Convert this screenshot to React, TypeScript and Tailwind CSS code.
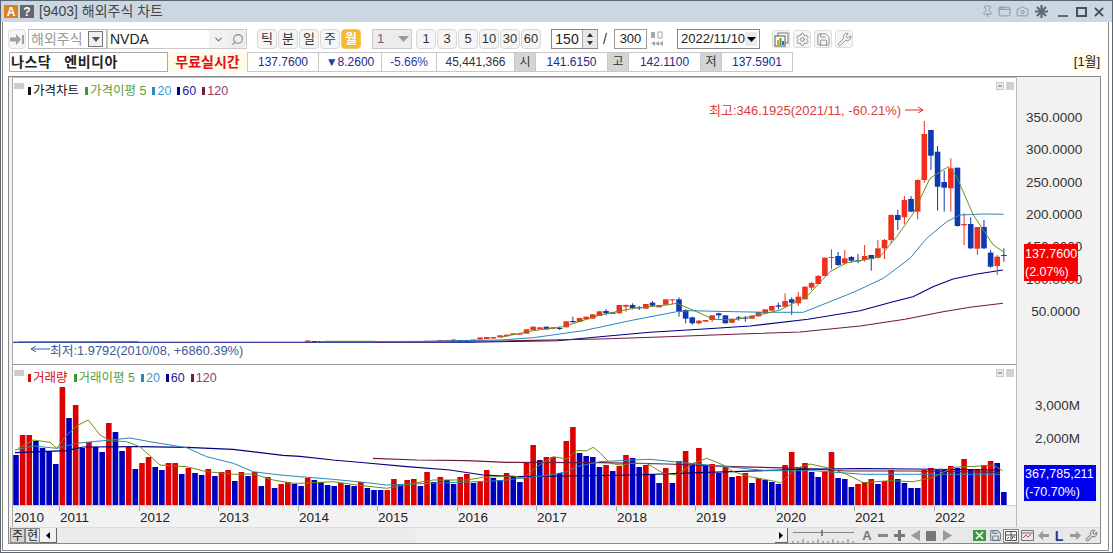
import React from "react";
import { Pin, AppWindow, Camera, Settings, Search, ChevronDown, Save, Wrench } from "lucide-react";

type P = [number, number];
const z = (ox: number, oy: number, pts: number[][]): P[] => pts.map(([x, y]) => [ox + x / 3, oy + y / 3] as P);
const line = (pts: P[]) => pts.map((p) => `${p[0].toFixed(1)},${p[1].toFixed(1)}`).join(" ");

// volume: height in px, R / B
const vol: [number, number][] = [
  [50,0],[70,1],[70,1],[64,0],[57,0],[54,0],[41,0],[118,1],[87,0],[100,1],[57,0],[63,1],[58,0],[53,0],[82,1],[73,0],[54,0],[58,1],[36,0],[42,1],
  [48,1],[38,0],[35,0],[42,1],[42,1],[31,0],[37,1],[32,0],[30,0],[36,1],[29,0],[33,1],[35,1],[24,0],[33,1],[29,0],[33,1],[19,0],[28,1],[17,0],
  [21,1],[23,1],[21,0],[19,0],[27,1],[25,0],[23,0],[20,0],[19,0],[22,1],[20,0],[19,0],[23,1],[17,0],[15,0],[15,0],[15,1],[26,1],[21,0],[25,1],
  [26,1],[19,0],[33,1],[23,0],[28,1],[25,0],[21,0],[28,1],[31,1],[22,0],[23,1],[35,1],[27,0],[25,0],[32,1],[29,0],[23,0],[43,1],[60,1],[45,0],
  [48,1],[48,1],[32,0],[64,1],[78,1],[52,0],[49,0],[48,0],[38,0],[40,1],[34,0],[39,1],[50,1],[47,0],[38,0],[40,1],[31,0],[22,0],[37,1],[22,0],
  [44,1],[54,1],[42,0],[57,1],[39,0],[41,1],[32,0],[39,1],[28,0],[29,1],[32,1],[22,0],[27,1],[25,0],[23,0],[21,0],[40,1],[53,1],[38,0],[42,1],
  [33,0],[28,0],[33,1],[53,1],[27,0],[26,0],[18,0],[21,1],[23,1],[26,1],[21,0],[24,1],[35,1],[26,0],[22,0],[17,0],[17,0],[35,1],[37,1],[35,0],
  [35,0],[39,1],[37,0],[46,1],[36,0],[36,1],[40,1],[44,1],[42,0],[13,0],
];

// candles: index, colour, body top, body bottom, wick top, wick bottom (zoomed coordinates)
const c8 = [
  [73,1,196,202],[74,1,194,199],[75,1,190,195],[76,1,190,194],[77,1,178,191],[78,1,170,180],[79,1,172,177],[80,0,170,178],[81,1,172,176],[82,0,174,176,170,180],
  [83,1,154,172],[84,0,153,157,140,157],[85,1,144,156],[86,1,140,148],[87,1,133,146],[88,1,124,138],[89,0,123,130,117,136],[90,0,127,131],[91,1,105,130],[92,1,105,110,103,125],
  [93,0,105,114,100,118],[94,0,112,114,108,120],[95,1,102,116],[96,0,98,107,93,108],[97,1,105,112],[98,1,88,104],[99,1,88,90,88,102],[100,0,88,125,82,140],[101,0,120,146,118,160],[102,0,142,160,140,164],
  [103,1,152,160,150,163],[104,1,150,155],[105,1,136,150,135,156],[106,0,130,136,128,146],[107,0,136,160],[108,1,146,158,146,160],[109,0,142,146,138,152],[110,0,143,146,138,155],[111,1,137,146],[112,1,126,139],
  [113,1,118,130],[114,1,108,122],[115,0,106,110,98,118],
];
const c9 = [
  [116,1,363,380,340,382],[117,0,358,368,352,405],[118,1,350,370,336,378],[119,1,320,358],[120,1,309,323,305,330],[121,1,288,312,285,312],[122,1,233,288],[123,1,231,233,208,268],[124,0,228,255,216,258],[125,1,235,250,210,252],
  [126,0,231,242,228,248],[127,0,241,244,222,250],
];
const c4 = [
  [128,1,468,480,435,485],[129,0,465,477,465,512],[130,1,445,473,420,475],[131,1,420,445,417,477],[132,1,345,420,343,430],[133,0,345,360,330,390],[134,1,300,352,288,372],[135,0,297,335,288,336],[136,1,240,335,238,358],[137,1,102,240,63,248],
  [138,0,90,167,90,210],[139,0,155,260,138,332],[140,0,246,263,212,335],[141,1,205,265,175,335],[142,0,203,378,203,380],[143,1,372,376,340,435],[144,0,372,445,352,447],[145,1,381,446,381,465],[146,0,381,445,360,447],[147,0,458,500,450,503],
  [148,1,470,498,465,525],[149,0,465,467,445,485],
];
const small = [
  [44,1,340.5,342],[45,0,341,342],[46,0,341,342],[47,0,341,342],[62,1,340.8,342],[63,1,340.8,342],[64,1,340,342],[65,1,340,342],[66,1,339.5,341],[67,0,340,341.5],[68,0,340,341.5],[69,1,339.5,341],[70,1,337.5,339.5],[71,1,337,339],[72,1,337,338.5],
];
type C = { i: number; up: number; t: number; b: number; wt: number; wb: number };
const mk = (list: number[][], oy: number): C[] =>
  list.map((r) => {
    const t = oy + r[2] / 3, b = oy + r[3] / 3;
    return { i: r[0], up: r[1], t, b, wt: r[4] !== undefined ? oy + r[4] / 3 : t, wb: r[5] !== undefined ? oy + r[5] / 3 : b };
  });
const candles: C[] = [
  ...small.map((r) => ({ i: r[0], up: r[1], t: r[2], b: r[3], wt: r[2], wb: r[3] })),
  ...mk(c8, 270), ...mk(c9, 180), ...mk(c4, 100),
];
const cx = (i: number) => 16 + 6.63 * i;

const pMA5 = [
  ...z(500, 270, [[0,202],[100,182],[190,170],[300,135],[400,115],[500,105],[530,100],[590,125],[640,148],[700,150],[800,130]]),
  ...z(780, 180, [[0,390],[80,350],[150,275],[200,248]]),
  ...z(860, 100, [[0,482],[60,470],[110,410],[160,340],[210,235],[265,200],[290,230],[340,345],[370,390],[400,435],[430,455]]),
];
const pMA20 = [
  [320, 341.6], [420, 341.4],
  ...z(500, 270, [[0,210],[100,203],[250,182],[400,150],[530,125],[570,122],[700,125],[800,127]]),
  ...z(780, 180, [[70,397],[100,385],[200,345]]),
  ...z(860, 100, [[0,568],[70,535],[150,475],[200,415],[260,365],[300,345],[370,342],[430,343]]),
] as P[];
const pMA60: P[] = [[13,342.3],[470,342.2],[557,340.7],[600,336.7],[650,332.3],[700,329.3],[750,326],[808,319.3],[860,310.7],[893,301.7],[913,296.7],[933,286.7],[953,279],[977,274],[1003,270]];
const pMA120: P[] = [[375,342],[500,341],[600,339],[667,336.7],[733,334.3],[800,332],[860,326],[905,319.3],[943,311.7],[970,307.3],[1003,303.3]];

const vGreen = [
  ...z(0, 330, [[55,355],[100,330],[150,337],[170,355],[200,315],[235,285],[265,270],[300,315],[330,332],[380,335],[420,350],[480,405],[560,410],[620,425],[700,433],[760,432],[820,450],[880,460]]),
  ...z(300, 360, [[0,370],[100,365],[170,375],[260,385],[340,370],[400,360],[500,360],[550,352],[640,348],[670,355],[710,320],[760,290],[800,297],[830,272],[860,272],[880,262],[900,278]]),
  ...z(600, 360, [[30,310],[60,315],[100,310],[140,310],[190,340],[230,345],[280,310],[320,295],[370,315],[400,335],[450,350],[530,365]]),
  ...z(780, 440, [[0,130],[50,85],[90,72],[150,85],[200,103],[250,128],[330,122],[400,125],[460,112],[520,82],[600,78],[640,75],[668,92]]),
];
const vTeal = [
  ...z(0, 330, [[45,360],[100,348],[170,355],[230,340],[310,332],[390,324],[450,335],[560,353],[620,380],[700,400],[760,425],[840,435]]),
  ...z(300, 360, [[0,350],[100,358],[200,368],[260,375],[340,372],[450,368],[600,362],[660,355],[750,345],[800,335],[830,320]]),
  ...z(600, 360, [[0,305],[100,300],[150,298],[250,308],[380,320],[500,332]]),
  ...z(780, 440, [[0,92],[100,92],[250,103],[400,103],[660,103]]),
];
const vNavy: P[] = [[15,452.7],[67,450.7],[83,447],[140,446.7],[187,447.3],[233,449.3],[283,455.3],[300,456.3],[333,460],[367,463],[407,466.7],[450,470],[483,475],[517,476.7],[600,475.5],[633,475],[700,472.7],[780,470],[813,469],[863,468.7],[913,469],[1000,470]];
const vMaroon: P[] = [[373,458.3],[417,460],[467,460.7],[507,462.3],[600,462.7],[667,464],[733,466.7],[800,468.3],[847,471],[913,471],[1000,472.3]];

const years = [
  { y: "2010", w: "w-[46px]" }, { y: "2011", w: "w-[80px]" }, { y: "2012", w: "w-[79px]" }, { y: "2013", w: "w-[80px]" }, { y: "2014", w: "w-[79px]" },
  { y: "2015", w: "w-[80px]" }, { y: "2016", w: "w-[79px]" }, { y: "2017", w: "w-[80px]" }, { y: "2018", w: "w-[79px]" }, { y: "2019", w: "w-[80px]" },
  { y: "2020", w: "w-[79px]" }, { y: "2021", w: "w-[80px]" }, { y: "2022", w: "w-[70px]" },
];

function PlotControls() {
  return (
    <div className="absolute right-[2px] top-[4px] flex gap-[2px]">
      <div className="flex h-[8px] w-[8px] items-center justify-center border border-[#c8c8c8] bg-[#ececec]"><div className="h-[2px] w-[4px] bg-[#aaa]" /></div>
      <div className="h-[8px] w-[8px] bg-[#d0d0d0]" />
    </div>
  );
}

function Legend({ items }: { items: [string, string, string][] }) {
  return (
    <div className="absolute left-[1px] top-[4px] flex items-center text-[12.5px] leading-[18px]">
      <div className="mr-[4px] h-[6px] w-[10px] -translate-y-[5px] bg-[#cccccc]" />
      {items.map(([label, color, mark]) => (
        <div key={label} className="mr-[6px] flex items-center" style={{ color }}>
          <div className="mr-[2px] h-[8px] w-[3px]" style={{ background: mark }} />
          {label}
        </div>
      ))}
    </div>
  );
}

function TB({ children, active, w = "w-[20px]" }: { children: React.ReactNode; active?: boolean; w?: string }) {
  return (
    <div className={`flex h-[20px] ${w} items-center justify-center rounded-[4px] border text-[13px] ${active ? "border-[#f0c860] bg-[#f6b92f] font-bold text-white" : "border-[#d8d8d8] bg-[#f5f5f5] text-[#333]"}`}>
      {children}
    </div>
  );
}

function Cell({ children, w, gray, color = "#1c2a8c" }: { children: React.ReactNode; w: string; gray?: boolean; color?: string }) {
  return (
    <div className={`flex h-[18px] ${w} items-center justify-center border-r border-[#c8c8c8] text-[12px] ${gray ? "bg-[#d4d4d4] text-[#333]" : "bg-white"}`} style={gray ? undefined : { color }}>
      {children}
    </div>
  );
}

function Mini({ children, active }: { children: React.ReactNode; active?: boolean }) {
  return <div className={`flex h-[14px] w-[16px] items-center justify-center ${active ? "border border-[#888] bg-[#f4f4f4]" : ""}`}>{children}</div>;
}

export default function App() {
  return (
    <div className="relative flex h-[553px] w-[1113px] flex-col overflow-hidden border border-[#5c6670] bg-white text-[#222] [font-family:'Liberation_Sans','Noto_Sans_CJK_KR',sans-serif]">
      {/* title bar */}
      <div className="flex h-[21px] shrink-0 items-center bg-[#cbd8e4] pl-[3px] pr-[8px]">
        <div className="flex h-[13px] w-[14px] items-center justify-center bg-[#d9821f] text-[12px] font-bold leading-none text-white">A</div>
        <div className="ml-[2px] flex h-[13px] w-[14px] items-center justify-center bg-[#66666e] text-[12px] font-bold leading-none text-white">?</div>
        <div className="ml-[5px] text-[14px] text-[#444]">[9403] 해외주식 차트</div>
        <div className="ml-auto flex items-center text-[#7b8794]">
          <Pin size={13} strokeWidth={1.4} />
          <AppWindow size={13} strokeWidth={1.4} className="ml-[4px]" />
          <Camera size={13} strokeWidth={1.4} className="ml-[5px]" />
          <svg width="13" height="13" viewBox="0 0 13 13" className="ml-[6px]" stroke="#5f6b76" strokeWidth="2.2"><path d="M6.500 0v13M0 6.500h13M2 2l9 9M11 2l-9 9" /></svg>
          <div className="ml-[10px] mt-[9px] h-[2px] w-[10px] bg-[#5f6b76]" />
          <div className="ml-[8px] h-[10px] w-[11px] border-2 border-[#47525c]" />
          <svg width="10" height="10" viewBox="0 0 11 11" className="ml-[7px]"><path d="M1 1 10 10M10 1 1 10" stroke="#47525c" strokeWidth="2.2" /></svg>
        </div>
      </div>

      {/* body */}
      <div className="ml-[1px] mr-[3px] flex h-[529px] shrink-0 flex-col border-x border-b border-[#8a8a8a] bg-white">
        {/* toolbar */}
        <div className="ml-[5px] mt-[7px] flex h-[20px] shrink-0 items-center">
          <div className="flex h-[20px] w-[18px] items-center justify-center rounded-[4px] border border-[#ddd] bg-[#f5f5f5]">
            <svg width="15" height="11" viewBox="0 0 15 11"><path d="M0 3.500h6V0l5 5.500-5 5.500V7.500H0z" fill="#a0a0a0" /><rect x="12" y="1" width="2" height="9" fill="#a0a0a0" /></svg>
          </div>
          <div className="ml-[2px] flex h-[20px] w-[79px] items-center justify-between border border-[#b8b8b8] pl-[2px] pr-[3px] text-[14px] text-[#999]">
            해외주식
            <div className="flex h-[16px] w-[15px] items-center justify-center border border-[#777] bg-[#f0f0f0]">
              <svg width="8" height="5"><path d="M0 0h8L4 5z" fill="#555" /></svg>
            </div>
          </div>
          <div className="flex h-[20px] w-[140px] items-center border border-[#c8c8c8] text-[14px] text-[#222]">
            <div className="w-[101px] pl-[2px]">NVDA</div>
            <div className="flex h-full w-[19px] items-center justify-center bg-[#f2f2f2]"><ChevronDown size={11} strokeWidth={2.5} className="text-[#777]" /></div>
            <div className="flex h-full w-[18px] items-center justify-center rounded-r-[4px] bg-[#ededed]"><Search size={13} className="-scale-x-100 text-[#888]" /></div>
          </div>
          <div className="ml-[10px] flex gap-[1px]">
            <TB>틱</TB><TB>분</TB><TB>일</TB><TB>주</TB><TB active>월</TB>
          </div>
          <div className="ml-[11px] flex h-[20px] w-[40px] items-center justify-between border border-[#c8c8c8] bg-[#ececec] pl-[4px] pr-[2px] text-[13px] text-[#666]">
            1
            <svg width="11" height="6"><path d="M0 0h11L5.500 6z" fill="#999" /></svg>
          </div>
          <div className="ml-[4px] flex gap-[1px]">
            {["1", "3", "5", "10", "30", "60"].map((t) => <TB key={t}>{t}</TB>)}
          </div>
          <div className="ml-[10px] flex h-[20px] w-[47px] items-center border border-[#888] border-r-0">
            <div className="w-[30px] text-center text-[14px] text-[#222]">150</div>
            <div className="flex h-full w-[16px] flex-col justify-between border-x border-[#aaa] bg-[#e8e8e8] py-[3px]">
              <svg width="14" height="4"><path d="M7 0l3 4H4z" fill="#333" /></svg>
              <svg width="14" height="4"><path d="M7 4l3-4H4z" fill="#333" /></svg>
            </div>
          </div>
          <div className="ml-[5px] w-[7px] text-[14px] text-[#333]">/</div>
          <div className="ml-[4px] flex h-[20px] w-[33px] items-center justify-center border border-[#999] text-[13px]">300</div>
          <svg width="14" height="16" viewBox="0 0 14 16" className="ml-[3px]" fill="#a8a8a8"><rect x="1" y="1" width="4" height="6" /><rect x="8" y="1" width="4" height="6" fill="none" stroke="#a8a8a8" /><path d="M5 10v5L1 12.500zM9 10v5L5 12.500zM13 10v5L9 12.500z" /></svg>
          <div className="ml-[13px] flex h-[20px] w-[83px] items-center justify-between border border-[#888] pl-[3px] pr-[2px] text-[13px]">
            2022/11/10
            <div className="flex h-[14px] w-[15px] items-center justify-center bg-[#eaeaea]"><svg width="9" height="5"><path d="M0 0h9L4.500 5z" fill="#000" /></svg></div>
          </div>
          <div className="ml-[12px] flex gap-[3px]">
            <div className="flex h-[18px] w-[18px] items-center justify-center rounded-[3px] border border-[#ddd] bg-[#f6f6f6]">
              <svg width="15" height="15" viewBox="0 0 15 15"><rect x="4" y="1" width="10" height="10" fill="none" stroke="#777" /><rect x="1" y="4" width="10" height="10" fill="#fff" stroke="#555" /><rect x="3" y="8" width="2" height="5" fill="#e8a020" /><rect x="5.500" y="6" width="2" height="7" fill="#4aa040" /><rect x="8" y="9" width="2" height="4" fill="#3070c0" /></svg>
            </div>
            <div className="flex h-[18px] w-[18px] items-center justify-center rounded-[3px] border border-[#ddd] bg-[#f6f6f6]"><Settings size={15} strokeWidth={1.3} className="text-[#777]" /></div>
            <div className="flex h-[18px] w-[18px] items-center justify-center rounded-[3px] border border-[#ddd] bg-[#f6f6f6]"><Save size={15} strokeWidth={1.3} className="text-[#777]" /></div>
            <div className="flex h-[18px] w-[18px] items-center justify-center rounded-[3px] border border-[#ddd] bg-[#f6f6f6]"><Wrench size={15} strokeWidth={1.3} className="text-[#777]" /></div>
          </div>
        </div>

        {/* info row */}
        <div className="ml-[6px] mt-[3px] flex h-[20px] shrink-0 items-center">
          <div className="flex h-[20px] w-[159px] items-center border border-[#aaa] pl-[1px] text-[14px] font-bold tracking-[0.5px] text-[#222]">나스닥&nbsp;&nbsp;&nbsp;엔비디아</div>
          <div className="flex h-[20px] w-[79px] items-center justify-center bg-[#fffbe8] text-[14px] font-bold text-[#e01010]">무료실시간</div>
          <div className="flex h-[20px] items-center border-l border-y border-[#c8c8c8]">
            <Cell w="w-[71px]">137.7600</Cell>
            <Cell w="w-[63px]"><span className="text-[#1c3aa8]">▼</span>8.2600</Cell>
            <Cell w="w-[55px]" color="#1c3aa8">-5.66%</Cell>
            <Cell w="w-[78px]" color="#333">45,441,366</Cell>
            <Cell w="w-[21px]" gray>시</Cell>
            <Cell w="w-[72px]">141.6150</Cell>
            <Cell w="w-[21px]" gray>고</Cell>
            <Cell w="w-[72px]">142.1100</Cell>
            <Cell w="w-[21px]" gray>저</Cell>
            <Cell w="w-[71px]">137.5901</Cell>
          </div>
          <div className="ml-auto mr-[7px] flex h-[20px] w-[28px] items-center justify-center bg-[#fffbe8] text-[13px]">[1월]</div>
        </div>

        {/* chart frame */}
        <div className="ml-[5px] mr-[7px] mt-[4px] flex h-[468px] shrink-0 flex-col border border-[#888] bg-[#f2f2f2]">
          <div className="flex h-[450px] shrink-0">
            <div className="ml-[3px] flex w-[1004px] flex-col border-l border-[#aaa]">
              <div className="h-[1px] shrink-0 bg-[#bbb]" />
              {/* price panel */}
              <div className="relative h-[286px] shrink-0 bg-white">
                <svg width="1003" height="286" viewBox="13 78 1003 286" className="block">
                  <polyline points={line(pMA60)} fill="none" stroke="#000080" strokeWidth="1.1" />
                  <polyline points={line(pMA120)} fill="none" stroke="#701a40" strokeWidth="1.1" />
                  <polyline points="18,341.8 138,341.6" fill="none" stroke="#2a88b0" strokeWidth="1" />
                  <polyline points="325,341.4 375,341.4" fill="none" stroke="#5c9a30" strokeWidth="1.2" />
                  {candles.map((c) => {
                    const col = c.up ? "#f0301c" : "#0c3ab0";
                    return (
                      <g key={c.i}>
                        <line x1={cx(c.i)} x2={cx(c.i)} y1={c.wt} y2={c.wb} stroke={col} strokeWidth="1" />
                        <rect x={cx(c.i) - 2.8} width={5.6} y={c.t} height={Math.max(c.b - c.t, 1)} fill={col} />
                      </g>
                    );
                  })}
                  <polyline points={line(pMA20)} fill="none" stroke="#2a88b8" strokeWidth="1" />
                  <polyline points={line(pMA5)} fill="none" stroke="#6b8f14" strokeWidth="1" />
                  <path d="M923 110H905M923 110l-5-3M923 110l-5 3" fill="none" stroke="#e03030" />
                  <path d="M31 349H50M31 349l5-3M31 349l5 3" fill="none" stroke="#3c5a96" />
                </svg>
                <Legend items={[["가격차트", "#111", "#111"], ["가격이평 5", "#5aa040", "#3a9a30"], ["20", "#3a9ad8", "#2a8ac8"], ["60", "#1a1aa0", "#000090"], ["120", "#904060", "#702040"]]} />
                <PlotControls />
                <div className="absolute left-[696px] top-[25px] text-[13px] leading-[16px] text-[#d8403c]">최고:346.1925(2021/11, -60.21%)</div>
                <div className="absolute left-[37px] top-[265px] text-[12.8px] leading-[16px] text-[#3c5a96]">최저:1.9792(2010/08, +6860.39%)</div>
              </div>
              <div className="h-[1px] shrink-0 bg-[#999]" />
              {/* volume panel */}
              <div className="relative h-[140px] shrink-0 bg-white">
                <svg width="1003" height="140" viewBox="13 365 1003 140" className="block">
                  {vol.map(([h, up], i) => (
                    <rect key={i} x={13.2 + 6.63 * i} width={5.6} y={505 - h} height={h} fill={up ? "#dc0000" : "#0000c0"} />
                  ))}
                  <polyline points={line(vMaroon)} fill="none" stroke="#701a40" strokeWidth="1.2" />
                  <polyline points={line(vNavy)} fill="none" stroke="#000080" strokeWidth="1.2" />
                  <polyline points={line(vTeal)} fill="none" stroke="#2a88b8" strokeWidth="1" />
                  <polyline points={line(vGreen)} fill="none" stroke="#6b8f14" strokeWidth="1" />
                </svg>
                <Legend items={[["거래량", "#d01010", "#d01010"], ["거래이평 5", "#5aa040", "#3a9a30"], ["20", "#3a9ad8", "#2a8ac8"], ["60", "#1a1aa0", "#000090"], ["120", "#904060", "#702040"]]} />
                <PlotControls />
              </div>
              {/* year axis */}
              <div className="flex h-[22px] shrink-0 border-t border-[#c4d0e8]">
                {years.map(({ y, w }, i) => (
                  <div key={y} className={`${w} relative shrink-0 pl-[1px] pt-[3px] text-[13.5px] leading-[17px] text-[#222]`}>
                    {i > 0 && <div className="absolute left-0 top-0 h-[5px] w-[1px] bg-[#aaa]" />}
                    {y}
                  </div>
                ))}
              </div>
            </div>
            {/* value axis */}
            <div className="relative flex-1 border-l border-[#bbb] pl-[9px] text-[13.5px] leading-[32.33px] text-[#333]">
              <div className="h-[25px]" />
              {["350.0000", "300.0000", "250.0000", "200.0000", "150.0000", "100.0000", " 50.0000"].map((v) => (
                <div key={v} className="h-[32.33px] w-[54px] whitespace-pre text-right">{v}</div>
              ))}
              <div className="h-[62px]" />
              {["3,000M", "2,000M"].map((v) => (
                <div key={v} className="h-[32.33px] w-[54px] text-right">{v}</div>
              ))}
              <div className="absolute left-[7px] top-[167px] flex h-[37px] w-[54px] flex-col justify-center whitespace-nowrap bg-[#f40000] pl-[1px] text-[12.5px] leading-[18px] text-white">
                <div>137.7600</div><div>(2.07%)</div>
              </div>
              <div className="absolute left-[7px] top-[388px] flex h-[36px] w-[72px] flex-col justify-center whitespace-nowrap bg-[#0000f0] pl-[1px] text-[12.5px] leading-[18px] text-white">
                <div>367,785,211</div><div>(-70.70%)</div>
              </div>
            </div>
          </div>

          {/* bottom controls */}
          <div className="flex h-[16px] shrink-0 items-center border-t border-[#ddd] bg-[#e8e8e8] pl-[1px]">
            <div className="flex h-[15px] w-[15px] items-center justify-center border border-[#888] bg-[#d4d4d4] text-[12px]">주</div>
            <div className="flex h-[15px] w-[15px] items-center justify-center border border-[#888] bg-[#e4e4e4] text-[12px]">현</div>
            <div className="flex h-[15px] w-[17px] items-center justify-center border-b border-r border-[#666] bg-[#f2f2f2]"><svg width="4" height="7"><path d="M4 0v7L0 3.500z" fill="#000" /></svg></div>
            <div className="h-[14px] w-[358px] bg-[#ececec] bg-[radial-gradient(#cfcfcf_0.5px,transparent_0.6px)] bg-[length:2px_2px]" />
            <div className="h-[15px] w-[360px] bg-[#f0f0f0]" />
            <div className="flex h-[15px] w-[13px] items-center justify-center border-b border-r border-[#666] bg-[#f2f2f2]"><svg width="4" height="7"><path d="M0 0v7L4 3.500z" fill="#000" /></svg></div>
            <div className="ml-[4px] flex h-[14px] w-[66px] flex-col justify-between">
              <svg width="66" height="14" viewBox="0 0 66 14">
                <path d="M1 3.500H62" stroke="#888" /><path d="M30 1v6" stroke="#666" strokeWidth="1.500" />
                <path d="M1 12V14M6 12V14M11 10V14M16 12V14M21 12V14M26 10V14M31 12V14M36 12V14M41 10V14M46 12V14M51 12V14M56 10V14M61 12V14" stroke="#777" />
              </svg>
            </div>
            <div className="ml-[1px] flex items-center">
              <span className="w-[16px] text-center text-[13px] font-bold leading-none text-[#777]">A</span>
              <Mini><div className="h-[3px] w-[10px] bg-[#888]" /></Mini>
              <Mini><svg width="11" height="11"><path d="M4 0h3v4h4v3H7v4H4V7H0V4h4z" fill="#777" /></svg></Mini>
              <Mini><svg width="9" height="11"><path d="M9 0v11L0 5.500z" fill="#999" /></svg></Mini>
              <Mini><div className="h-[10px] w-[10px] bg-[#777]" /></Mini>
              <Mini><svg width="9" height="11"><path d="M0 0v11l9-5.500z" fill="#999" /></svg></Mini>
            </div>
            <div className="ml-[16px] flex items-center">
              <Mini><svg width="13" height="11"><rect width="13" height="11" fill="#3a9a40" /><path d="M3 2l7 7M10 2l-7 7" stroke="#fff" strokeWidth="1.500" /></svg></Mini>
              <Mini><Save size={13} className="text-[#6a7a8c]" /></Mini>
              <Mini active><svg width="12" height="10" fill="none" stroke="#555"><path d="M.5.5h11v9H.5zM6 .5v9M.5 4h11M2 8l2-2M7 8l1-3 2 2" /></svg></Mini>
              <Mini><svg width="13" height="11" fill="none" stroke="#777"><path d="M.5.5h12v10H.5zM.5 3h12" /><path d="M2 8l3-3 2 2 3-3" stroke="#c04040" /></svg></Mini>
              <Mini><svg width="11" height="9"><path d="M0 4.500L5 0v3h6v3H5v3z" fill="#999" /></svg></Mini>
              <Mini><span className="text-[14px] font-bold leading-none text-[#1c3a90]">L</span></Mini>
              <Mini><svg width="11" height="9"><path d="M11 4.500L6 0v3H0v3h6v3z" fill="#999" /></svg></Mini>
              <Mini><Wrench size={13} className="text-[#888]" /></Mini>
            </div>
          </div>
        </div>
      </div>
    </div>
  );
}
